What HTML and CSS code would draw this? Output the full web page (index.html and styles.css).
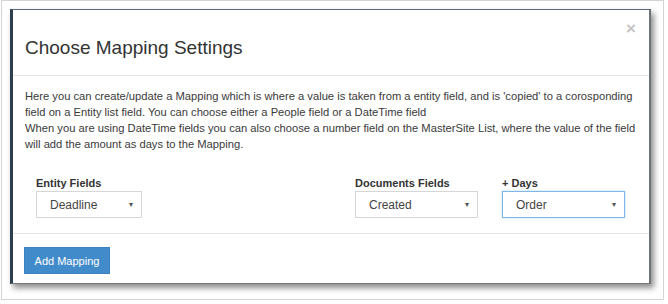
FILE: index.html
```html
<!DOCTYPE html>
<html>
<head>
    <link rel="stylesheet" href="styles.css">
</head>
<body>
    <div class="frame">
        <div class="modal">
            <div class="modal-header">
                <h4 class="modal-title">Choose Mapping Settings</h4>
                <span class="close">&times;</span>
            </div>

            <div class="modal-body">
                <p class="intro">
                    Here you can create/update a Mapping which is where a value is taken from a entity field, and is 'copied' to a corosponding<br>
                    field on a Entity list field. You can choose either a People field or a DateTime field<br>
                    When you are using DateTime fields you can also choose a number field on the MasterSite List, where the value of the field<br>
                    will add the amount as days to the Mapping.
                </p>

                <div class="field-row">
                    <div class="field field-entity">
                        <label>Entity Fields</label>
                        <div class="select select-small">
                            <span>Deadline</span>
                            <span class="caret">&#9662;</span>
                        </div>
                    </div>
                    <div class="field field-docs">
                        <label>Documents Fields</label>
                        <div class="select">
                            <span>Created</span>
                            <span class="caret">&#9662;</span>
                        </div>
                    </div>
                    <div class="field">
                        <label>+ Days</label>
                        <div class="select focused">
                            <span>Order</span>
                            <span class="caret">&#9662;</span>
                        </div>
                    </div>
                </div>
            </div>

            <div class="modal-footer">
                <button class="btn-primary">Add Mapping</button>
            </div>
        </div>
    </div>
</body>
</html>
```

FILE: styles.css
```css
body {
    margin: 0;
    padding: 0;
    background: #fff;
    font-family: "Liberation Sans", Arial, sans-serif;
    color: #333;
}

.frame {
    width: 661px;
    height: 298px;
    margin: 0 0 0 1px;
    border: 1px solid #d4d4d4;
    background: #fff;
}

.modal {
    width: 636px;
    margin: 8px 0 0 8px;
    background: #fff;
    border-top: 1px solid #56677a;
    border-left: 3px solid #2c3f4f;
    border-right: 2px solid #6c747a;
    border-bottom: 1px solid #777;
    box-shadow: 3px 4px 6px rgba(0, 0, 0, 0.45);
}

.modal-header {
    display: flex;
    justify-content: space-between;
    align-items: flex-start;
    padding: 28px 13px 17px 12px;
    border-bottom: 1px solid #e5e5e5;
}

.modal-title {
    margin: 0;
    font-size: 19px;
    line-height: 20px;
    font-weight: normal;
    color: #333;
}

.close {
    margin-top: -19px;
    font-size: 17px;
    line-height: 20px;
    font-weight: bold;
    color: #c4c4c4;
}

.modal-body {
    padding: 12px 12px 15px 12px;
}

.intro {
    margin: 0 0 23px 0;
    font-size: 11.2px;
    line-height: 16px;
    color: #3a3a3a;
    white-space: nowrap;
}

.field-row {
    display: flex;
    padding-left: 11px;
}

.field {
    display: flex;
    flex-direction: column;
}

.field-entity {
    width: 319px;
}

.field-docs {
    width: 147px;
}

.field label {
    font-size: 11px;
    line-height: 16px;
    font-weight: bold;
    color: #333;
}

.select {
    box-sizing: border-box;
    width: 123px;
    height: 27px;
    display: flex;
    align-items: center;
    justify-content: space-between;
    padding: 0 8px 0 13px;
    border: 1px solid #d6d6d6;
    font-size: 12px;
    color: #444;
    background: #fff;
}

.select-small {
    width: 106px;
}

.select.focused {
    border-color: #7fb8e8;
    box-shadow: 0 0 2px rgba(102, 175, 233, 0.5);
}

.caret {
    font-size: 8px;
    color: #555;
}

.modal-footer {
    padding: 13px 12px 9px 11px;
    border-top: 1px solid #e5e5e5;
}

.btn-primary {
    width: 86px;
    height: 27px;
    padding: 0;
    background: #428bca;
    border: 1px solid #3a82c2;
    color: #fff;
    font-family: "Liberation Sans", Arial, sans-serif;
    font-size: 11px;
}
```
